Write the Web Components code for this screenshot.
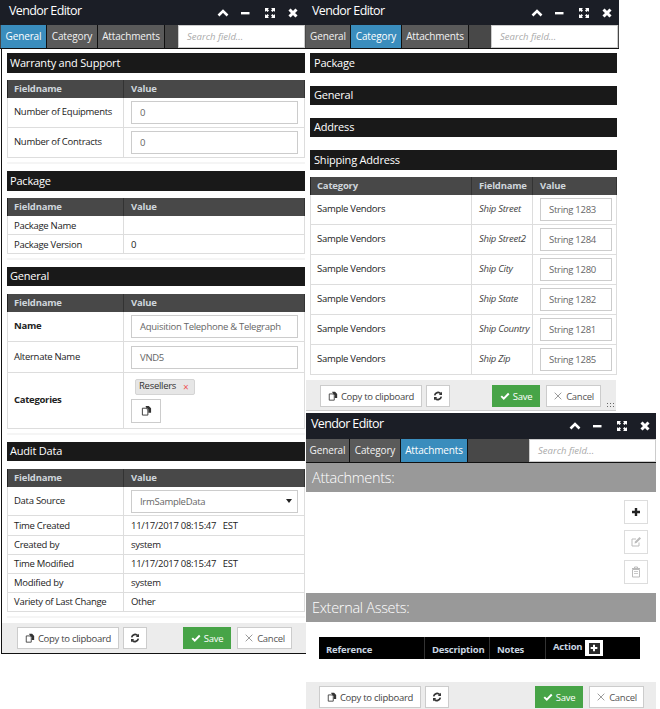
<!DOCTYPE html>
<html><head><meta charset="utf-8"><style>
html,body{margin:0;padding:0;background:#fff;font-family:"Open Sans",sans-serif}
body{position:relative;width:660px;height:709px;overflow:hidden}
</style></head><body>
<vendor-window active="General" style="left:0;top:0;width:306px;height:654px;--ir:7px;--tl:4px;--pad:4px 1px 0 5px;--edge:1px;--tp:1px;--g:45px;--fm:15px;--ft:4px;--bb:1px solid #111;--fh:31px;--bp:3px" ><div>
<vendor-section title="Warranty and Support">
 <vendor-row head><vendor-cell>Fieldname</vendor-cell><vendor-cell>Value</vendor-cell></vendor-row>
 <vendor-row style="--h:30px"><vendor-cell>Number of Equipments</vendor-cell><vendor-cell><vendor-input value="0"></vendor-input></vendor-cell></vendor-row>
 <vendor-row style="--h:30px"><vendor-cell>Number of Contracts</vendor-cell><vendor-cell><vendor-input value="0"></vendor-input></vendor-cell></vendor-row>
</vendor-section>
<vendor-section title="Package">
 <vendor-row head><vendor-cell>Fieldname</vendor-cell><vendor-cell>Value</vendor-cell></vendor-row>
 <vendor-row style="--h:19px;--cb:0px"><vendor-cell>Package Name</vendor-cell><vendor-cell></vendor-cell></vendor-row>
 <vendor-row style="--h:19px;--cb:0px"><vendor-cell>Package Version</vendor-cell><vendor-cell>0</vendor-cell></vendor-row>
</vendor-section>
<vendor-section title="General" style="--bh:19px;--bl:18px">
 <vendor-row head><vendor-cell>Fieldname</vendor-cell><vendor-cell>Value</vendor-cell></vendor-row>
 <vendor-row style="--h:30px"><vendor-cell bold>Name</vendor-cell><vendor-cell><vendor-input value="Aquisition Telephone &amp; Telegraph"></vendor-input></vendor-cell></vendor-row>
 <vendor-row style="--h:31px"><vendor-cell>Alternate Name</vendor-cell><vendor-cell><vendor-input value="VND5"></vendor-input></vendor-cell></vendor-row>
 <vendor-row style="--h:56px"><vendor-cell bold>Categories</vendor-cell><vendor-cell><vendor-tags></vendor-tags></vendor-cell></vendor-row>
</vendor-section>
<vendor-section title="Audit Data" style="--bh:19px;--bl:18px">
 <vendor-row head><vendor-cell>Fieldname</vendor-cell><vendor-cell>Value</vendor-cell></vendor-row>
 <vendor-row style="--h:29px"><vendor-cell>Data Source</vendor-cell><vendor-cell><vendor-input value="IrmSampleData" select></vendor-input></vendor-cell></vendor-row>
 <vendor-row style="--h:20px;--cb:0px"><vendor-cell>Time Created</vendor-cell><vendor-cell>11/17/2017 08:15:47&nbsp;&nbsp; EST</vendor-cell></vendor-row>
 <vendor-row style="--h:19px"><vendor-cell>Created by</vendor-cell><vendor-cell>system</vendor-cell></vendor-row>
 <vendor-row style="--h:19px"><vendor-cell>Time Modified</vendor-cell><vendor-cell>11/17/2017 08:15:47&nbsp;&nbsp; EST</vendor-cell></vendor-row>
 <vendor-row style="--h:19px"><vendor-cell>Modified by</vendor-cell><vendor-cell>system</vendor-cell></vendor-row>
 <vendor-row style="--h:19px"><vendor-cell>Variety of Last Change</vendor-cell><vendor-cell>Other</vendor-cell></vendor-row>
</vendor-section>
</div></vendor-window>

<vendor-window active="Category" grip style="left:306px;top:0;width:313px;height:411px;--ir:6px;--tl:1px;--pad:4px 2px 0 4px;--edge:0px;--g:44px;--fm:14px;--fr:15px;--fe:3px;--ft:5px;--bb:1px solid #ccc;--fh:31px;--cols:162px 61px 84px;--im:4px;--bp:4px">
<div>
<vendor-section title="Package" plain></vendor-section>
<vendor-section title="General" plain style="--bh:19px;--bl:18px"></vendor-section>
<vendor-section title="Address" plain style="--bh:19px;--bl:18px"></vendor-section>
<vendor-section title="Shipping Address" plain>
 <vendor-row head><vendor-cell>Category</vendor-cell><vendor-cell>Fieldname</vendor-cell><vendor-cell>Value</vendor-cell></vendor-row>
 <vendor-row style="--h:30px"><vendor-cell>Sample Vendors</vendor-cell><vendor-cell italic>Ship Street</vendor-cell><vendor-cell><vendor-input value="String 1283"></vendor-input></vendor-cell></vendor-row>
 <vendor-row style="--h:30px"><vendor-cell>Sample Vendors</vendor-cell><vendor-cell italic>Ship Street2</vendor-cell><vendor-cell><vendor-input value="String 1284"></vendor-input></vendor-cell></vendor-row>
 <vendor-row style="--h:30px"><vendor-cell>Sample Vendors</vendor-cell><vendor-cell italic>Ship City</vendor-cell><vendor-cell><vendor-input value="String 1280"></vendor-input></vendor-cell></vendor-row>
 <vendor-row style="--h:30px"><vendor-cell>Sample Vendors</vendor-cell><vendor-cell italic>Ship State</vendor-cell><vendor-cell><vendor-input value="String 1282"></vendor-input></vendor-cell></vendor-row>
 <vendor-row style="--h:30px"><vendor-cell>Sample Vendors</vendor-cell><vendor-cell italic>Ship Country</vendor-cell><vendor-cell><vendor-input value="String 1281"></vendor-input></vendor-cell></vendor-row>
 <vendor-row style="--h:30px"><vendor-cell>Sample Vendors</vendor-cell><vendor-cell italic>Ship Zip</vendor-cell><vendor-cell><vendor-input value="String 1285"></vendor-input></vendor-cell></vendor-row>
</vendor-section>
</div></vendor-window>

<vendor-window active="Attachments" style="left:306px;top:413px;width:350px;height:296px;--bar:26px;--ir:5px;--tl:0px;--pad:0;--edge:0px;--g:43px;--fm:13px;--fr:12px;--ft:4px;--fh:27px;--sr:0px">
<div>
<vendor-banner text="Attachments:" style="--h:29px"></vendor-banner>
<vendor-tools></vendor-tools>
<vendor-banner text="External Assets:" style="--h:29px"></vendor-banner>
<vendor-assets></vendor-assets>
</div></vendor-window>

<script>
const ICONS={
 up:'<path d="M1.5 8.5 6 4l4.5 4.5" fill="none" stroke="currentColor" stroke-width="2.6"/>',
 min:'<rect x="1" y="5" width="8.500" height="2.4" fill="currentColor"/>',
 max:'<path d="M1 1h4L3.800 2.200 5 3.500 3.500 5 2.200 3.800 1 5zM11 1v4L9.800 3.800 8.500 5 7 3.500 8.200 2.200 7 1zM1 11V7l1.200 1.200L3.500 7 5 8.500 3.800 9.800 5 11zM11 11H7l1.200-1.200L7 8.500 8.500 7l1.300 1.200L11 7z" fill="currentColor"/>',
 close:'<path d="M2.500 2.500l7 7M9.500 2.500l-7 7" fill="none" stroke="currentColor" stroke-width="3"/>',
 copy:'<path d="M1.500 3.500h4l2 2v5.500h-6z" fill="#fff" stroke="currentColor" stroke-width="1"/><path d="M5 1h3.500L11 3.500V8.500H8V5L5.500 2.800z" fill="currentColor"/>',
 sync:'<path d="M2 5.200A4.200 4.200 0 0 1 9.300 3.200M10 6.800A4.200 4.200 0 0 1 2.700 8.800" fill="none" stroke="currentColor" stroke-width="2"/><path d="M10.800 1v3.800H7zM1.200 11V7.200H5z" fill="currentColor"/>',
 check:'<path d="M1.500 6.200 4.500 9.200 10.500 3" fill="none" stroke="currentColor" stroke-width="2.400"/>',
 x:'<path d="M2 2l8 8M10 2l-8 8" fill="none" stroke="currentColor" stroke-width="1"/>',
 plus:'<path d="M6 2v8M2 6h8" fill="none" stroke="currentColor" stroke-width="2.400"/>',
 edit:'<path d="M9 6.500V10H2V3h4" fill="none" stroke="currentColor" stroke-width="1"/><path d="M4.500 7.500l.5-2L9.500 1 11 2.500 6.500 7z" fill="currentColor"/>',
 trash:'<path d="M2.500 3.500h7V11h-7z" fill="none" stroke="currentColor" stroke-width="1"/><path d="M2 2.500h8M4.500 2.500V1h3v1.500" fill="none" stroke="currentColor" stroke-width="1"/><path d="M4 5.500h4M4 7.500h4" stroke="currentColor" stroke-width=".8"/>'
};
class VIcon extends HTMLElement{
 connectedCallback(){const s=this.getAttribute('size')||12;
  this.attachShadow({mode:'open'}).innerHTML=`<style>:host{display:inline-flex;align-items:center;justify-content:center}svg{display:block}</style><svg width="${s}" height="${s}" viewBox="0 0 12 12">${ICONS[this.getAttribute('name')]}</svg>`;}
}
customElements.define('vendor-icon',VIcon);

class VWindow extends HTMLElement{
 constructor(){super();const a=this.getAttribute('active');
  const tabs=[['General','var(--g)'],['Category','50px'],['Attachments','66px']].map(([t,w])=>`<span class="tab${t===a?' on':''}" style="width:${w}">${t}</span>`).join('');
  this.attachShadow({mode:'open'}).innerHTML=`<style>
  :host{position:absolute;display:flex;flex-direction:column;box-sizing:border-box;overflow:hidden;font-family:"Open Sans",sans-serif}
  .bar{flex:none;height:var(--bar,25px);background:#1b1e26;color:#fff;display:flex;align-items:center;font-size:12.500px;letter-spacing:-.62px;padding-right:var(--ir);padding-left:5px}
  .bar span{flex:1;padding-left:var(--tl,3px);padding-bottom:5px}
  .bar vendor-icon{width:12px;margin-left:11.500px}
  .tabs{flex:none;height:23px;background:#484848;border-bottom:1px solid #111;display:flex;padding-left:var(--tp,0)}
  .tab{box-sizing:content-box;background:#5a5a5a;border-right:1px solid #111;color:#f2f2f2;font-size:10px;letter-spacing:-.15px;line-height:22px;text-align:center;white-space:nowrap;overflow:hidden}
  .tab.on{background:#3a8dbd;color:#fff}
  .search{margin-left:auto;margin-right:var(--sr,1px);width:127px;box-sizing:border-box;background:#fff;border:1px solid #ccc;color:#aaa;font-style:italic;font-size:9.500px;line-height:21px;padding-left:8px}
  .body{flex:1;min-height:0;overflow:hidden;margin-left:var(--edge);border-left:var(--edge) solid #111;padding:var(--pad)}
  .foot{flex:none;height:var(--fh);box-sizing:border-box;background:#ececec;margin-left:var(--edge);margin-right:var(--fe,0);border-left:var(--edge) solid #111;border-bottom:var(--bb,0);display:flex;align-items:flex-start;padding:var(--ft) var(--fr,14px) 0 var(--fm);gap:4px;position:relative}
  .sp{flex:1}.foot .c{margin-left:2px}
  .grip{position:absolute;right:1px;bottom:1px;width:9px;height:7px;background:radial-gradient(circle,#666 .7px,transparent 1px) 0 0/3px 3px}
  </style>
  <div class="bar"><span>Vendor Editor</span><vendor-icon name="up"></vendor-icon><vendor-icon name="min"></vendor-icon><vendor-icon name="max"></vendor-icon><vendor-icon name="close"></vendor-icon></div>
  <div class="tabs">${tabs}<div class="search">Search field...</div></div>
  <div class="body"><slot></slot></div>
  <div class="foot"><vendor-button icon="copy" w="102">Copy to clipboard</vendor-button><vendor-button icon="sync" w="24"></vendor-button><span class="sp"></span><vendor-button icon="check" w="48" kind="save">Save</vendor-button><vendor-button class="c" icon="x" w="55" kind="cancel">Cancel</vendor-button>${this.hasAttribute('grip')?'<i class="grip"></i>':''}</div>`;
 }
}
customElements.define('vendor-window',VWindow);

class VButton extends HTMLElement{
 constructor(){super();const k=this.getAttribute('kind')||'';
  this.attachShadow({mode:'open'}).innerHTML=`<style>
  :host{display:inline-flex;flex:none;box-sizing:border-box;height:22px;width:${this.getAttribute('w')}px;align-items:center;justify-content:center;gap:3px;background:#fff;border:1px solid #ccc;color:#444;font-size:9.500px;letter-spacing:-.28px;white-space:nowrap}
  :host([kind=save]){background:#47a447;border-color:#47a447;color:#fff}
  :host([kind=cancel]){color:#555}
  vendor-icon{color:${k==='cancel'?'#888':k==='save'?'#fff':'#333'}}
  </style><vendor-icon name="${this.getAttribute('icon')}" size="10"></vendor-icon><slot></slot>`;
 }
}
customElements.define('vendor-button',VButton);

class VSection extends HTMLElement{
 constructor(){super();
  this.attachShadow({mode:'open'}).innerHTML=`<style>
  :host{display:block;padding-bottom:4px;border-bottom:2px solid #f5f5f5;margin-bottom:7px}
  :host([plain]){padding-bottom:0;border-bottom:0;margin-bottom:13px}
  .band{height:var(--bh,20px);background:#191919;color:#fff;font-size:11px;letter-spacing:-.2px;line-height:var(--bl,20px);padding-left:var(--bp,3px);white-space:nowrap;margin-bottom:calc(27px - var(--bh,20px))}
  :host([plain]) .band{margin-bottom:7px}
  </style><div class="band">${this.getAttribute('title')}</div><slot></slot>`;
  this.removeAttribute('title');
 }
}
customElements.define('vendor-section',VSection);

class VRow extends HTMLElement{
 constructor(){super();
  this.attachShadow({mode:'open'}).innerHTML=`<style>
  :host{display:grid;grid-template-columns:var(--cols,117px 181px);height:var(--h,18px);box-sizing:border-box;border-bottom:1px solid #ddd;font-size:9.500px;letter-spacing:-.28px;color:#222}
  :host([head]){height:18px;background:#484848;border:0;color:#cfd6dc;font-weight:700;font-size:9.500px;letter-spacing:-.2px}
  </style><slot></slot>`;
 }
}
customElements.define('vendor-row',VRow);

class VCell extends HTMLElement{
 constructor(){super();
  this.attachShadow({mode:'open'}).innerHTML=`<style>
  :host{display:flex;align-items:center;box-sizing:border-box;padding-left:7px;padding-bottom:var(--cb,2px);min-width:0;white-space:nowrap;border-right:1px solid #ddd}
  :host(:first-child){border-left:1px solid #ddd;padding-left:6px}
  :host([bold]){font-weight:700}
  :host([italic]){font-style:italic;color:#444;padding-left:7px}
  :host-context(vendor-row[head]){border-color:#333}
  :host-context(vendor-row[head]):host(:first-child){border-left-color:#222}
  </style><slot></slot>`;
 }
}
customElements.define('vendor-cell',VCell);

class VInput extends HTMLElement{
 constructor(){super();const sel=this.hasAttribute('select');
  this.attachShadow({mode:'open'}).innerHTML=`<style>
  :host{display:flex;align-items:center;justify-content:space-between;box-sizing:border-box;flex:1;height:23px;margin:2px var(--im,6px) 0 0;border:1px solid #ccc;background:#fff;color:#666;padding:0 5px 0 8px;overflow:hidden}
  i{width:0;height:0;border:3.500px solid transparent;border-top:4px solid #222;border-bottom:0}
  </style><span>${this.getAttribute('value')}</span>${sel?'<i></i>':''}`;
 }
}
customElements.define('vendor-input',VInput);

class VTags extends HTMLElement{
 constructor(){super();
  this.attachShadow({mode:'open'}).innerHTML=`<style>
  :host{display:flex;flex-direction:column;align-items:flex-start;gap:4px;margin-top:2px}
  .tag{margin-left:4px;height:16px;width:60px;box-sizing:border-box;background:#e6e6e6;border:1px solid #d4d4d4;border-radius:2px;color:#333;line-height:12px;padding-left:3px;display:flex;gap:7px}
  .tag b{color:#e55;font-weight:400;font-size:10px;line-height:15px}
  .btn{width:30px;height:24px;box-sizing:border-box;border:1px solid #ccc;display:flex;align-items:center;justify-content:center;color:#333}
  </style><div class="tag">Resellers <b>×</b></div><div class="btn"><vendor-icon name="copy" size="11"></vendor-icon></div>`;
 }
}
customElements.define('vendor-tags',VTags);

class VBanner extends HTMLElement{
 constructor(){super();
  this.attachShadow({mode:'open'}).innerHTML=`<style>
  :host{display:block;height:var(--h);background:#999;color:#fff;font-size:14.500px;font-weight:300;line-height:var(--h);padding-left:6px;letter-spacing:-.3px}
  </style>${this.getAttribute('text')}`;
 }
}
customElements.define('vendor-banner',VBanner);

class VTools extends HTMLElement{
 constructor(){super();
  const b=(n,c)=>`<div class="b" style="color:${c}"><vendor-icon name="${n}"></vendor-icon></div>`;
  this.attachShadow({mode:'open'}).innerHTML=`<style>
  :host{display:flex;flex-direction:column;align-items:flex-end;gap:6px;height:101px;padding:8px 8px 0 0;box-sizing:border-box}
  .b{width:24px;height:24px;box-sizing:border-box;border:1px solid #ddd;display:flex;align-items:center;justify-content:center}
  .b:first-child{border-color:#ccc}
  </style>${b('plus','#222')}${b('edit','#bbb')}${b('trash','#bbb')}`;
 }
}
customElements.define('vendor-tools',VTools);

class VAssets extends HTMLElement{
 constructor(){super();
  this.attachShadow({mode:'open'}).innerHTML=`<style>
  :host{display:block;margin:15px 16px 0 13px;height:22px;background:#000;color:#c9d6e2;font-weight:700;font-size:9.500px;letter-spacing:-.2px}
  .t{display:grid;grid-template-columns:106px 65px 56px 94px;height:22px}
  .t>div{display:flex;align-items:center;padding:3px 0 0 7px;border-right:1px solid #333;box-sizing:border-box;white-space:nowrap}
  .t>div:last-child{border:0;padding-top:0;padding-bottom:3px}
  .add{margin-left:3px;width:18px;height:16px;background:#fff;display:flex;align-items:center;justify-content:center;margin-top:3px}
  .add i{width:11px;height:11px;background:#2a2a2a;color:#fff;display:flex;align-items:center;justify-content:center}
  </style><div class="t"><div>Reference</div><div>Description</div><div>Notes</div><div>Action<span class="add"><i><vendor-icon name="plus" size="10"></vendor-icon></i></span></div></div>`;
 }
}
customElements.define('vendor-assets',VAssets);
</script>
</body></html>
